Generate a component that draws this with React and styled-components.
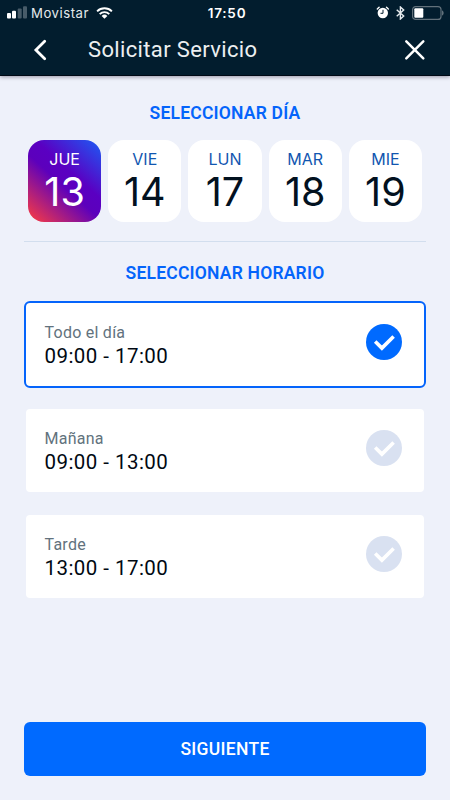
import React, { useState } from "react";
import styled, { createGlobalStyle } from "styled-components";

const GlobalStyle = createGlobalStyle`
  * {
    box-sizing: border-box;
  }

  body {
    margin: 0;
    background: #eef1fa;
    font-family: Roboto, sans-serif;
  }

  button {
    font-family: inherit;
    cursor: pointer;
  }

  svg {
    display: block;
  }
`;

const Screen = styled.div`
  width: 450px;
  height: 800px;
  display: flex;
  flex-direction: column;
  background: #eef1fa;
  overflow: hidden;
`;

const Header = styled.header`
  height: 76px;
  flex-shrink: 0;
  background: #021d2e;
  border-bottom: 1px solid #000a16;
  box-shadow: 0 1px 4px rgba(20, 10, 40, 0.4);
  color: #fff;
`;

const StatusBar = styled.div`
  height: 25px;
  padding: 0 6px 0 7px;
  display: grid;
  grid-template-columns: 1fr auto 1fr;
  align-items: center;
  font-family: Inter, sans-serif;
`;

const StatusGroup = styled.div`
  display: flex;
  align-items: center;
  justify-content: ${({ $end }) => ($end ? "flex-end" : "flex-start")};
  gap: ${({ $end }) => ($end ? "7px" : "0")};
`;

const Carrier = styled.span`
  margin: 0 7px 0 4px;
  font-size: 13.2px;
  letter-spacing: 0.5px;
  color: #e4e9ec;
`;

const Clock = styled.span`
  padding-left: 3px;
  font-size: 13.5px;
  font-weight: 600;
  letter-spacing: 0.8px;
`;

const NavBar = styled.div`
  height: 50px;
  padding: 0 24px 0 32px;
  display: flex;
  align-items: center;
`;

const IconButton = styled.button`
  padding: 0;
  border: none;
  background: none;
  color: #fff;
`;

const Title = styled.h1`
  flex: 1;
  margin: 0 0 0 39px;
  font-size: 22px;
  line-height: 26px;
  font-weight: 400;
  letter-spacing: 0.35px;
  color: #eceff1;
`;

const Content = styled.main`
  flex: 1;
  padding: 25px 24px 24px;
  display: flex;
  flex-direction: column;
`;

const SectionTitle = styled.h2`
  margin: 0;
  font-size: 17.5px;
  line-height: 24px;
  font-weight: 600;
  letter-spacing: 0.2px;
  text-align: center;
  color: #0464fb;
`;

const Days = styled.div`
  margin: 15px 0 19px;
  padding: 0 4px;
  display: grid;
  grid-template-columns: repeat(5, 1fr);
  gap: 7px;
`;

const Day = styled.button`
  height: 82px;
  padding: 9px 0 0;
  border: none;
  border-radius: 16px;
  display: flex;
  flex-direction: column;
  align-items: center;
  font-family: Inter, sans-serif;
  color: ${({ $active }) => ($active ? "#fff" : "#02111f")};
  background: ${({ $active }) =>
    $active
      ? "linear-gradient(42deg, #f83b44 2%, #5c00bc 46%, #5a00c2 60%, #1c5cf5 100%)"
      : "#fff"};
`;

const DayName = styled.span`
  font-size: 16px;
  line-height: 20px;
  color: ${({ $active }) => ($active ? "#fff" : "#1156b0")};
`;

const DayNumber = styled.span`
  margin-top: 3px;
  font-size: 39.5px;
  line-height: 40px;
`;

const Divider = styled.hr`
  width: 100%;
  height: 1px;
  margin: 0 0 19px;
  border: none;
  background: #d2deee;
`;

const Slots = styled.div`
  margin-top: 16px;
  display: flex;
  flex-direction: column;
  gap: 19px;
`;

const Slot = styled.button`
  height: 87px;
  padding: 0 22px 0 18.5px;
  display: flex;
  align-items: center;
  justify-content: space-between;
  text-align: left;
  border: 2px solid ${({ $active }) => ($active ? "#0464fb" : "transparent")};
  border-radius: 6px;
  background: #fff;
  background-clip: padding-box;
`;

const SlotText = styled.div`
  padding-top: 1px;
`;

const SlotLabel = styled.div`
  font-size: 16px;
  line-height: 22px;
  letter-spacing: 0.25px;
  color: #62727d;
`;

const SlotHours = styled.div`
  font-size: 20.5px;
  line-height: 25px;
  letter-spacing: 0.45px;
  color: #000812;
`;

const CheckIcon = styled.svg`
  margin-bottom: 5px;
  color: ${({ $active }) => ($active ? "#006aff" : "#d9e1f1")};
`;

const NextButton = styled.button`
  height: 54px;
  margin-top: auto;
  border: none;
  border-radius: 6px;
  background: #006aff;
  color: #fff;
  font-size: 17.5px;
  font-weight: 500;
  letter-spacing: 0.3px;
`;

const days = [
  { name: "JUE", number: 13 },
  { name: "VIE", number: 14 },
  { name: "LUN", number: 17 },
  { name: "MAR", number: 18 },
  { name: "MIE", number: 19 },
];

const slots = [
  { label: "Todo el día", hours: "09:00 - 17:00" },
  { label: "Mañana", hours: "09:00 - 13:00" },
  { label: "Tarde", hours: "13:00 - 17:00" },
];

const SignalIcon = () => (
  <svg width="20" height="13" viewBox="0 0 20 13">
    <rect x="0" y="7" width="4" height="5.5" rx="1" fill="#fff" />
    <rect x="5" y="4.8" width="4" height="7.7" rx="1" fill="#fff" />
    <rect x="10.7" y="2.5" width="4" height="10" rx="1" fill="#485c69" />
    <rect x="16" y="0.3" width="4" height="12.2" rx="1" fill="#485c69" />
  </svg>
);

const WifiIcon = () => (
  <svg width="17" height="12" viewBox="0 0 18 13" fill="none" stroke="#fff" strokeWidth="2.1">
    <path d="M1 4.7a11.4 11.4 0 0 1 16 0" />
    <path d="M3.8 7.7a7.4 7.4 0 0 1 10.4 0" />
    <path d="M9 12.7 5.9 9.7a4.4 4.4 0 0 1 6.2 0z" fill="#fff" stroke="none" />
  </svg>
);

const AlarmIcon = () => (
  <svg width="13" height="13" viewBox="0 0 13 13">
    <circle cx="6.8" cy="7" r="5.2" fill="#fff" />
    <path d="M1.3 3 3.1 1.2M12.3 3 10.5 1.2" stroke="#fff" strokeWidth="1.4" strokeLinecap="round" />
    <path d="M7 3.8v3.5H4.5" stroke="#021d2e" strokeWidth="1" fill="none" />
  </svg>
);

const BluetoothIcon = () => (
  <svg width="9" height="14" viewBox="0 0 9 14" fill="none" stroke="#e8edf0" strokeWidth="1.4">
    <path d="m.7 3.7 7 6.3-3.3 3V1l3.3 3-7 6.3" />
  </svg>
);

const BatteryIcon = () => (
  <svg width="32" height="14" viewBox="0 0 32 14">
    <rect x="0.6" y="0.6" width="28.4" height="12.8" rx="3" fill="none" stroke="#62717b" strokeWidth="1.2" />
    <rect x="2.3" y="2.3" width="9" height="9.4" rx="1" fill="#fff" />
    <path d="M30 4.5c2.2.6 2.2 4.4 0 5z" fill="#62717b" />
  </svg>
);

const App = () => {
  const [day, setDay] = useState(13);
  const [slot, setSlot] = useState("Todo el día");

  return (
    <>
      <GlobalStyle />
      <Screen>
        <Header>
          <StatusBar>
            <StatusGroup>
              <SignalIcon />
              <Carrier>Movistar</Carrier>
              <WifiIcon />
            </StatusGroup>
            <Clock>17:50</Clock>
            <StatusGroup $end>
              <AlarmIcon />
              <BluetoothIcon />
              <BatteryIcon />
            </StatusGroup>
          </StatusBar>
          <NavBar>
            <IconButton aria-label="Volver">
              <svg width="17" height="24" viewBox="0 0 17 24" fill="none" stroke="currentColor" strokeWidth="2.8" strokeLinecap="round">
                <path d="M12.7 3.2 3.9 12l8.8 8.8" />
              </svg>
            </IconButton>
            <Title>Solicitar Servicio</Title>
            <IconButton aria-label="Cerrar">
              <svg width="22" height="22" viewBox="0 0 22 22" stroke="currentColor" strokeWidth="2.5" strokeLinecap="round">
                <path d="m2.3 2.3 17 17M19.3 2.3l-17 17" />
              </svg>
            </IconButton>
          </NavBar>
        </Header>

        <Content>
          <SectionTitle>SELECCIONAR DÍA</SectionTitle>
          <Days>
            {days.map(({ name, number }) => (
              <Day key={number} $active={day === number} onClick={() => setDay(number)}>
                <DayName $active={day === number}>{name}</DayName>
                <DayNumber>{number}</DayNumber>
              </Day>
            ))}
          </Days>
          <Divider />
          <SectionTitle>SELECCIONAR HORARIO</SectionTitle>
          <Slots>
            {slots.map(({ label, hours }) => (
              <Slot key={label} $active={slot === label} onClick={() => setSlot(label)}>
                <SlotText>
                  <SlotLabel>{label}</SlotLabel>
                  <SlotHours>{hours}</SlotHours>
                </SlotText>
                <CheckIcon $active={slot === label} width="36" height="36" viewBox="0 0 36 36">
                  <circle cx="18" cy="18" r="18" fill="currentColor" />
                  <path d="m9.2 17.4 6.7 6.7 11.7-11.7" fill="none" stroke="#fff" strokeWidth="3.6" />
                </CheckIcon>
              </Slot>
            ))}
          </Slots>
          <NextButton>SIGUIENTE</NextButton>
        </Content>
      </Screen>
    </>
  );
};

export default App;
